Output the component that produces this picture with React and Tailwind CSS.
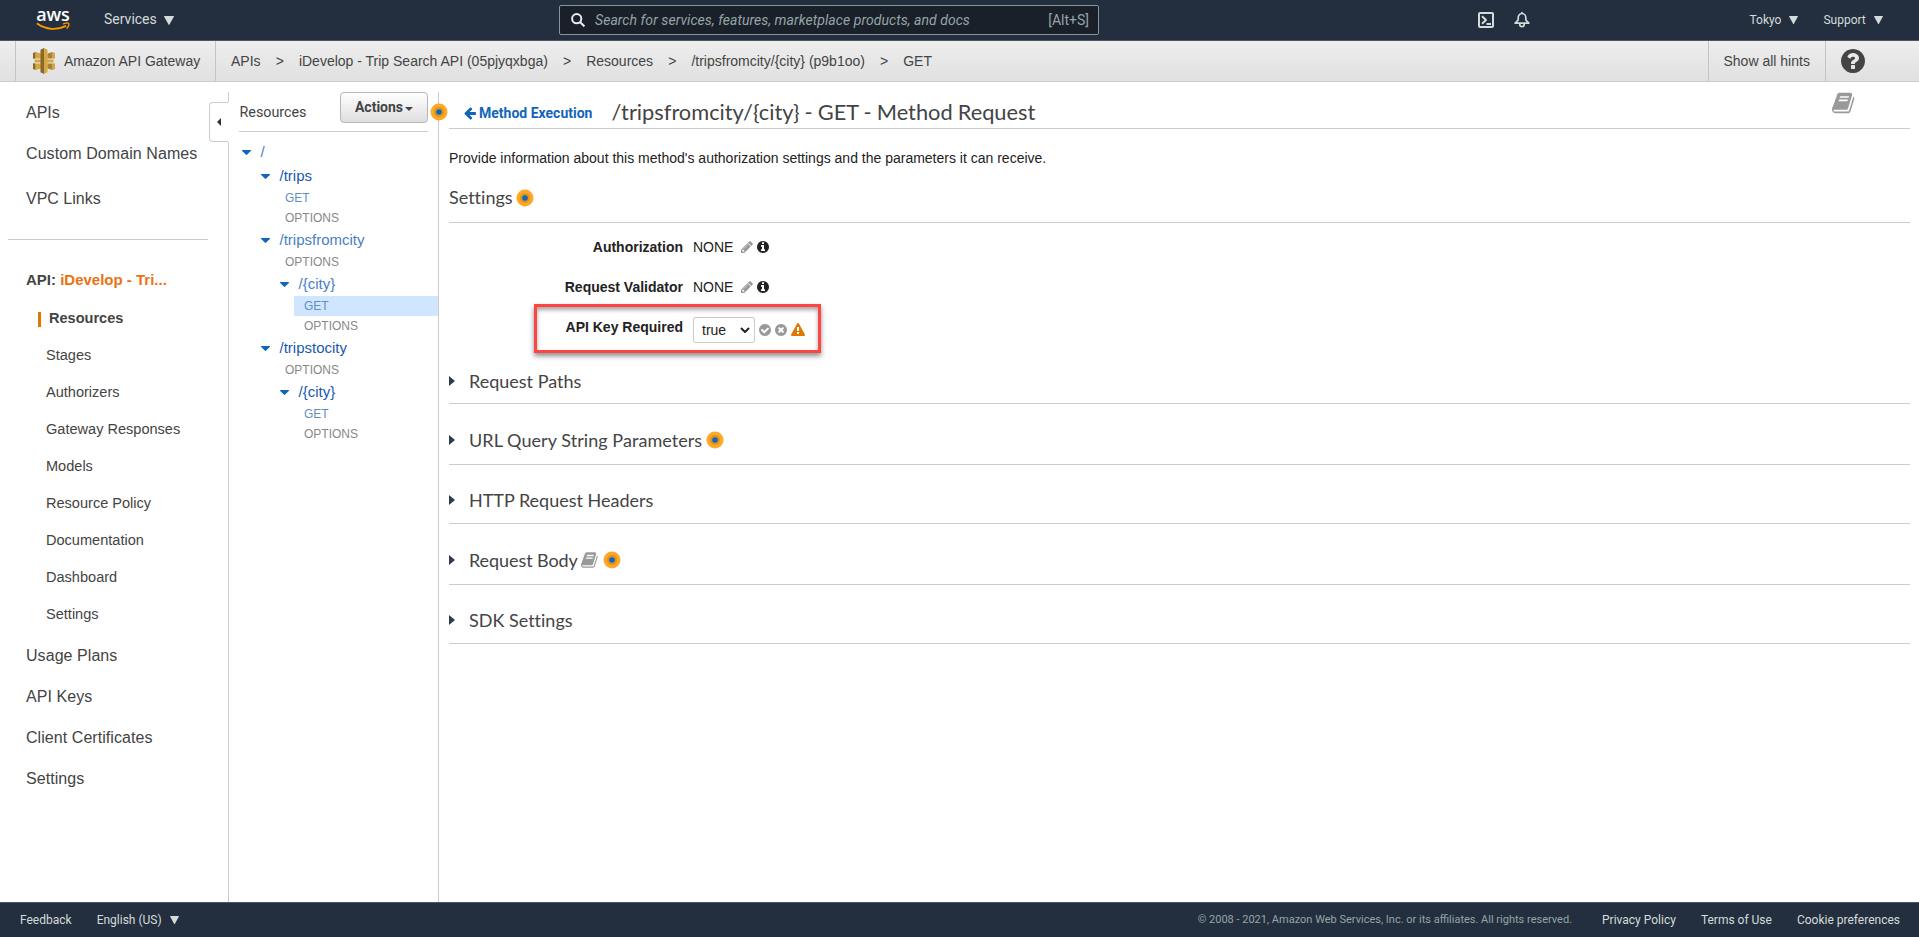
const PATHS = {
  book: 'M1639 478q40 57 18 129l-275 906q-19 64-76.5 107.5t-122.5 43.5h-923q-77 0-148.5-53.5t-99.5-131.5q-24-67-2-127 0-4 3-27t4-37q1-8-3-21.5t-3-19.5q2-11 8-21t16.5-23.5 16.5-23.5q23-38 45-91.5t30-91.5q3-10 .5-30t-.5-28q3-11 17-28t17-23q21-36 42-92t25-90q1-9-2.5-32t.5-28q4-13 22-30.5t22-22.5q19-26 42.5-84.5t27.5-96.5q1-8-3-25.5t-2-26.5q2-8 9-18t18-23 17-21q8-12 16.5-30.5t15-35 16-36 19.5-32 26.5-23.5 36-11.5 47.5 5.5l-1 3q38-9 51-9h761q74 0 114 56t18 130l-274 906q-36 119-71.5 153.5t-128.5 34.5h-869q-27 0-38 15-11 16-1 43 24 70 144 70h923q29 0 56-15.5t35-41.5l300-987q7-22 5-57 38 15 59 43zm-1064 2q-4 13 2 22.5t20 9.5h608q13 0 25.5-9.5t16.5-22.5l21-64q4-13-2-22.5t-20-9.5h-608q-13 0-25.5 9.5t-16.5 22.5zm-83 256q-4 13 2 22.5t20 9.5h608q13 0 25.5-9.5t16.5-22.5l21-64q4-13-2-22.5t-20-9.5h-608q-13 0-25.5 9.5t-16.5 22.5z',
  arrowLeft: 'M1664 896v128q0 53-32.5 90.5t-84.5 37.5h-704l293 294q38 36 38 90t-38 90l-75 76q-37 37-90 37-52 0-91-37l-651-652q-37-37-37-90 0-52 37-91l651-650q38-38 91-38 52 0 90 38l75 74q38 38 38 91t-38 91l-293 293h704q52 0 84.5 37.5t32.5 90.5z',
  pencil: 'M491 1536l91-91-235-235-91 91v107h128v128h107zm523-928q0-22-22-22-10 0-17 7l-542 542q-7 7-7 17 0 22 22 22 10 0 17-7l542-542q7-7 7-17zm-54-192l416 416-832 832h-416v-416zm683 96q0 53-37 90l-166 166-416-416 166-165q36-38 90-38 53 0 91 38l235 234q37 39 37 91z',
  info: 'M1152 1376v-160q0-14-9-23t-23-9h-96v-512q0-14-9-23t-23-9h-320q-14 0-23 9t-9 23v160q0 14 9 23t23 9h96v320h-96q-14 0-23 9t-9 23v160q0 14 9 23t23 9h448q14 0 23-9t9-23zm-128-896v-160q0-14-9-23t-23-9h-192q-14 0-23 9t-9 23v160q0 14 9 23t23 9h192q14 0 23-9t9-23zm640 416q0 209-103 385.5t-279.5 279.5-385.5 103-385.5-103-279.5-279.5-103-385.5 103-385.5 279.5-279.5 385.5-103 385.5 103 279.5 279.5 103 385.5z',
  check: 'M1412 734q0-28-18-46l-91-90q-19-19-45-19t-45 19l-408 407-226-226q-19-19-45-19t-45 19l-91 90q-18 18-18 46 0 27 18 45l362 362q19 19 45 19 27 0 46-19l543-543q18-18 18-45zm252 162q0 209-103 385.5t-279.5 279.5-385.5 103-385.5-103-279.5-279.5-103-385.5 103-385.5 279.5-279.5 385.5-103 385.5 103 279.5 279.5 103 385.5z',
  times: 'M1277 1122q0-26-19-45l-181-181 181-181q19-19 19-45 0-27-19-46l-90-90q-19-19-46-19-26 0-45 19l-181 181-181-181q-19-19-45-19-27 0-46 19l-90 90q-19 19-19 46 0 26 19 45l181 181-181 181q-19 19-19 45 0 27 19 46l90 90q19 19 46 19 26 0 45-19l181-181 181 181q19 19 45 19 27 0 46-19l90-90q19-19 19-46zm387-226q0 209-103 385.5t-279.5 279.5-385.5 103-385.5-103-279.5-279.5-103-385.5 103-385.5 279.5-279.5 385.5-103 385.5 103 279.5 279.5 103 385.5z',
  warning: 'M1024 1375v-190q0-14-9.5-23.5t-22.5-9.5h-192q-13 0-22.5 9.5t-9.5 23.5v190q0 14 9.5 23.5t22.5 9.5h192q13 0 22.5-9.5t9.5-23.5zm-2-374l18-459q0-12-10-19-13-11-24-11h-220q-11 0-24 11-10 7-10 21l17 457q0 10 10 16.5t24 6.5h185q14 0 23.5-6.5t10.5-16.5zm-14-934l768 1408q35 63-2 126-17 29-46.5 46t-63.5 17h-1536q-34 0-63.5-17t-46.5-46q-37-63-2-126l768-1408q17-31 47-49t65-18 65 18 47 49z',
  question: 'M1024 1376v-192q0-14-9-23t-23-9h-192q-14 0-23 9t-9 23v192q0 14 9 23t23 9h192q14 0 23-9t9-23zm256-672q0-88-55.5-163t-138.5-116-170-41q-243 0-371 213-15 24 8 42l132 100q7 6 19 6 16 0 25-12 53-68 86-92 34-24 86-24 48 0 85.5 26t37.5 59q0 38-20 61t-68 45q-63 28-115.5 86.5t-52.5 125.5v36q0 14 9 23t23 9h192q14 0 23-9t9-23q0-19 21.5-49.5t54.5-49.5q32-18 49-28.5t46-35 44.5-48 28-60.5 12.5-81zm384 192q0 209-103 385.5t-279.5 279.5-385.5 103-385.5-103-279.5-279.5-103-385.5 103-385.5 279.5-279.5 385.5-103 385.5 103 279.5 279.5 103 385.5z',
};

function Glyph({ name, className }) {
  return (
    <svg viewBox="0 0 1792 1792" fill="currentColor" className={`shrink-0 ${className}`}>
      <path d={PATHS[name]} />
    </svg>
  );
}

function Down({ className }) {
  return (
    <svg viewBox="0 0 10 9" fill="currentColor" className={`shrink-0 ${className}`}>
      <path d="M0.4 0h9.2a.4.4 0 0 1 .35.6L5.5 8.6a.6.6 0 0 1-1 0L.05.6A.4.4 0 0 1 .4 0z" />
    </svg>
  );
}

function Hint({ className = '' }) {
  return (
    <svg viewBox="0 0 18 18" className={`h-[18px] w-[18px] shrink-0 ${className}`}>
      <circle cx="9" cy="9" r="8.5" fill="#ffa726" />
      <circle cx="9" cy="9" r="5" fill="#e0941f" />
      <circle cx="9" cy="9" r="2.8" fill="#1166bb" />
    </svg>
  );
}

function AwsLogo() {
  return (
    <div className="flex h-[22px] w-[34px] flex-col items-center">
      <span className="h-[13px] font-['Open_Sans',sans-serif] text-[18px] leading-[10px] font-semibold tracking-[-0.2px] text-white">aws</span>
      <svg viewBox="0 0 34 9" className="h-[9px] w-[34px]">
        <path d="M1.500 1.800C10 7.800 21 8.400 29.500 4.200" fill="none" stroke="#ff9900" strokeWidth="1.900" strokeLinecap="round" />
        <path d="M27.500 1.800C29.500 1.100 32 0.900 32.600 1.400c.5.900-.2 3.200-1.500 4.800" fill="none" stroke="#ff9900" strokeWidth="1.300" strokeLinecap="round" />
      </svg>
    </div>
  );
}

function GatewayLogo() {
  return (
    <svg viewBox="0 0 22 26" className="h-[26px] w-[22px] shrink-0">
      <path d="M2.500 4L8 5.500v5H2.500zM2.500 22L8 20.500v-5H2.500zM1.500 11.500H8v3H1.500z" fill="#d9a741" />
      <path d="M0 5l2.500-1v6.500L0 10.800zM0 21l2.500 1v-6.500L0 15.200zM11 0L7.500 1.800v22.400L11 26z" fill="#876929" />
      <path d="M11 0l3.500 1.800v22.400L11 26zM19.500 4l2.500 1v5.800l-2.500-.3zM19.500 22l2.500-1v-5.800l-2.500.3zM14.500 11.500h6v3h-6z" fill="#d9a741" />
      <path d="M19.500 4l-5 1.500v5h5zM19.500 22l-5-1.500v-5h5z" fill="#a98232" />
    </svg>
  );
}

function TopBar() {
  return (
    <header className="flex h-[41px] items-center border-b border-[#4b5563] bg-[#232f3e] font-['Roboto',sans-serif] text-[#d5dbdb]">
      <div className="ml-9"><AwsLogo /></div>
      <div className="mb-[2px] ml-[34px] flex w-[455px] items-center gap-[7px] text-[14px]">
        <span>Services</span>
        <Down className="mt-[2px] h-[9px] w-[10px]" />
      </div>
      <div className="flex h-[30px] w-[540px] items-center rounded-[2px] border border-[#879596] bg-[#1a2029] pr-[9px] pl-[11px] text-[#95a5a6]">
        <svg viewBox="0 0 14 14" className="h-[14px] w-[14px]" fill="none" stroke="#eaeded" strokeWidth="2">
          <circle cx="5.700" cy="5.700" r="4.600" />
          <path d="M9 9l4.400 4.400" />
        </svg>
        <span className="ml-[10px] flex-1 text-[14px] tracking-[0.06px] italic">Search for services, features, marketplace products, and docs</span>
        <span className="text-[14px]">[Alt+S]</span>
      </div>
      <svg viewBox="0 0 16 16" className="ml-[379px] h-4 w-4" fill="none" stroke="currentColor" strokeWidth="2" strokeLinejoin="round">
        <rect x="1" y="1" width="14" height="14" rx="1" />
        <path d="M4 4.200L8 8l-4 3.800M8.500 12H13" />
      </svg>
      <svg viewBox="0 0 16 16" className="ml-5 h-4 w-4" fill="none" stroke="currentColor" strokeWidth="1.700" strokeLinejoin="round">
        <path d="M1.200 11.200L4.200 8V5.800C4.200 3.400 5.800 1.500 8 1.500s3.800 1.900 3.800 4.300V8l3 3.200z" />
        <path d="M5.800 11.500v1a2.200 2.200 0 0 0 4.400 0v-1M8 0v1.500" />
      </svg>
      <div className="mb-px ml-[219.500px] flex items-center gap-2 text-[12px]">
        <span>Tokyo</span>
        <Down className="mt-[1px] h-2 w-[9px]" />
      </div>
      <div className="mb-px ml-[25px] flex items-center gap-2 text-[12px]">
        <span>Support</span>
        <Down className="mt-[1px] h-2 w-[9px]" />
      </div>
    </header>
  );
}

const CRUMBS = ['APIs', 'iDevelop - Trip Search API (05pjyqxbga)', 'Resources', '/tripsfromcity/{city} (p9b1oo)', 'GET'];

function CrumbBar() {
  return (
    <nav className="flex h-[41px] border-b border-[#ccc] bg-gradient-to-b from-[#eeeeee] to-[#e0e0e0] text-[14px] text-[#444]">
      <div className="ml-[15px] flex w-[201px] items-center border-x border-[#c4c4c4] pl-[17px]">
        <GatewayLogo />
        <span className="ml-[9px]">Amazon API Gateway</span>
      </div>
      <div className="flex flex-1 items-center pl-[15px]">
        {CRUMBS.map((c, i) => (
          <span key={c} className="flex items-center whitespace-pre">
            {i > 0 && <span className="w-[38.300px] text-center">{'>'}</span>}
            {c}
          </span>
        ))}
      </div>
      <div className="flex w-[118px] items-center border-x border-[#c4c4c4] pl-[14.500px]">Show all hints</div>
      <div className="flex w-[93px] items-center pl-[13px]">
        <Glyph name="question" className="h-7 w-7" />
      </div>
    </nav>
  );
}

const SUB = ['Stages', 'Authorizers', 'Gateway Responses', 'Models', 'Resource Policy', 'Documentation', 'Dashboard', 'Settings'];
const BOTTOM = ['Usage Plans', 'API Keys', 'Client Certificates', 'Settings'];

function SideNav() {
  return (
    <aside className="flex w-[209px] shrink-0 flex-col text-[16px] text-[#444]">
      <div className="flex h-[41px] items-center pl-[26px]">APIs</div>
      <div className="flex h-[41px] items-center pl-[26px] tracking-[0.080px]">Custom Domain Names</div>
      <div className="mt-1 flex h-[41px] items-center pl-[26px]">VPC Links</div>
      <div className="mt-5 ml-2 h-px w-[200px] bg-[#ccc]" />
      <div className="mt-5 flex h-[41px] items-center pl-[26px] text-[15px] font-bold whitespace-pre">
        API: <span className="text-[#ec7211]">iDevelop - Tri...</span>
      </div>
      <div className="flex h-[36px] items-center pl-[38px] text-[14.560px] font-bold">
        <span className="mr-2 h-[15px] w-[3px] bg-[#e07700]" />
        Resources
      </div>
      {SUB.map((s) => (
        <div key={s} className="flex h-[37px] items-center pl-[46px] text-[14.560px]">{s}</div>
      ))}
      <div className="mt-[2px] tracking-[0.060px]">
        {BOTTOM.map((s) => (
          <div key={s} className="flex h-[41px] items-center pl-[26px]">{s}</div>
        ))}
      </div>
    </aside>
  );
}

function CollapseRail() {
  return (
    <div className="flex w-5 shrink-0 flex-col pt-[10px]">
      <div className="h-[10px] border-r border-[#ccc]" />
      <div className="flex h-[40px] w-[19px] items-center rounded-l-[4px] border border-r-0 border-[#ccc] pl-[7px] text-[#333]">
        <svg viewBox="0 0 4 8" fill="currentColor" className="h-2 w-1"><path d="M4 0v8L0 4z" /></svg>
      </div>
      <div className="flex-1 border-r border-[#ccc]" />
    </div>
  );
}

const TREE = [
  { t: '/', d: 0, r: true, soft: true },
  { t: '/trips', d: 1, r: true },
  { t: 'GET', d: 1 },
  { t: 'OPTIONS', d: 1 },
  { t: '/tripsfromcity', d: 1, r: true, soft: true },
  { t: 'OPTIONS', d: 1 },
  { t: '/{city}', d: 2, r: true, soft: true },
  { t: 'GET', d: 2, on: true },
  { t: 'OPTIONS', d: 2 },
  { t: '/tripstocity', d: 1, r: true },
  { t: 'OPTIONS', d: 1 },
  { t: '/{city}', d: 2, r: true },
  { t: 'GET', d: 2 },
  { t: 'OPTIONS', d: 2 },
];
const INDENT = ['ml-0', 'ml-[19px]', 'ml-[38px]'];

function ResourceTree() {
  return (
    <section className="w-[210px] shrink-0 pt-[10px]">
      <div className="relative flex h-full flex-col border-r border-[#ccc]">
        <div className="ml-[10px] flex h-10 w-[189px] items-start justify-between border-b border-[#ccc]">
          <span className="pt-[10px] pl-[0.500px] font-['Roboto',sans-serif] text-[14.300px] text-[#444]">Resources</span>
          <button className="flex h-[31px] w-[88px] items-center justify-center gap-[2px] rounded-[4px] border border-[#b8b8b8] bg-gradient-to-b from-white to-[#dedede] font-['Roboto',sans-serif] text-[14px] font-bold text-[#444]">
            Actions
            <svg viewBox="0 0 8 4" fill="currentColor" className="mt-[2px] h-1 w-2"><path d="M0 0h8L4 4z" /></svg>
          </button>
        </div>
        <Hint className="absolute top-[11px] -right-[10px]" />
        <div className="pt-2 pl-[13px]">
          {TREE.map((n, i) =>
            n.r ? (
              <div key={i} className={`flex h-6 items-center text-[15px] ${INDENT[n.d]} ${n.soft ? 'text-[#4a80c4]' : 'text-[#1a5ab0]'}`}>
                <svg viewBox="0 0 9 5" className="mt-px mr-[8px] h-[5px] w-[9px]"><path d="M.5 0h8a.5.5 0 0 1 .3.900L4.900 4.800a.5.500 0 0 1-.8 0L.2.900A.5.500 0 0 1 .5 0z" fill="#1166bb" /></svg>
                <span className="pl-[1.500px]">{n.t}</span>
              </div>
            ) : (
              <div key={i} className={INDENT[n.d]}>
                <div className={`ml-[14px] flex h-5 items-center pl-[10px] text-[12px] ${n.on ? 'bg-[#d0e6fe]' : ''} ${n.t === 'GET' ? 'text-[#5f8fc3]' : 'text-[#888]'}`}>{n.t}</div>
              </div>
            )
          )}
        </div>
      </div>
    </section>
  );
}

function SettingRow({ label, children }) {
  return (
    <div className="flex h-10 items-center text-[14px] text-[#222]">
      <div className="w-[234px] text-right font-bold">{label}</div>
      <div className="ml-[10px] flex items-center">{children}</div>
    </div>
  );
}

function NoneValue() {
  return (
    <>
      <span>NONE</span>
      <Glyph name="pencil" className="ml-[7px] h-[14px] w-[14px] text-[#999]" />
      <Glyph name="info" className="ml-[2px] h-[14px] w-[14px] text-[#222]" />
    </>
  );
}

const SECTIONS = [
  { t: 'Request Paths', h: 'h-[45px]', gap: '' },
  { t: 'URL Query String Parameters', h: 'h-[49px]', gap: 'mt-3', track: 'tracking-[0.060px]', hint: true },
  { t: 'HTTP Request Headers', h: 'h-[47px]', gap: 'mt-3' },
  { t: 'Request Body', h: 'h-[49px]', gap: 'mt-3', track: 'tracking-[-0.080px]', hint: true, book: true },
  { t: 'SDK Settings', h: 'h-[47px]', gap: 'mt-3' },
];

function Main() {
  return (
    <main className="flex flex-1 flex-col pr-[9px] pl-[10px] [font-variant-ligatures:none]">
      <div className="flex h-[47px] border-b border-[#ccc]">
        <div className="flex h-[30px] items-center self-end pl-[14px]">
          <Glyph name="arrowLeft" className="mr-[2px] h-[14px] w-[14px] text-[#1166bb]" />
          <span className="w-[113px] font-['Roboto',sans-serif] text-[14px] font-bold whitespace-nowrap text-[#1166bb]">Method Execution</span>
        </div>
        <h1 className="ml-[19.500px] self-end font-['Lato',sans-serif] text-[21.800px] leading-[32px] [word-spacing:-0.5px] text-[#444]">/tripsfromcity/{'{city}'} - GET - Method Request</h1>
        <Glyph name="book" className="mt-[9px] mr-[54px] ml-auto h-[24px] w-[24px] text-[#999]" />
      </div>
      <p className="mt-[19px] text-[14px] leading-[20px] text-[#222]">Provide information about this method's authorization settings and the parameters it can receive.</p>
      <div className="mt-[11px] flex h-[44px] gap-[3px] border-b border-[#ccc]">
        <h2 className="pt-[6px] font-['Lato',sans-serif] text-[18px] leading-[24px] text-[#444]">Settings</h2>
        <Hint className="mt-[10px]" />
      </div>
      <div className="mt-[4px]">
        <SettingRow label="Authorization"><NoneValue /></SettingRow>
        <SettingRow label="Request Validator"><NoneValue /></SettingRow>
        <div className="relative">
          <SettingRow label="API Key Required">
            <div className="mt-[6px] flex items-center">
              <div className="flex h-[26px] w-[62px] items-center justify-between rounded-[2px] border border-[#ccc] bg-white pr-1 pl-2">
                true
                <svg viewBox="0 0 10 6" className="h-[6px] w-[10px]" fill="none" stroke="#222" strokeWidth="2"><path d="M1 1l4 4 4-4" /></svg>
              </div>
              <Glyph name="check" className="ml-[3px] h-[14px] w-[14px] text-[#999]" />
              <Glyph name="times" className="ml-[2px] h-[14px] w-[14px] text-[#999]" />
              <Glyph name="warning" className="ml-[3px] h-[14px] w-[14px] text-[#e07700]" />
            </div>
          </SettingRow>
          <div className="pointer-events-none absolute -top-[3px] left-[85px] h-[49px] w-[287px] border-[3px] border-[#ff4444] shadow-[0_3px_5px_rgba(0,0,0,0.45),inset_0_3px_4px_rgba(0,0,0,0.35)]" />
        </div>
      </div>
      <div className="mt-[12px]">
        {SECTIONS.map((s) => (
          <div key={s.t} className={`flex items-center border-b border-[#ccc] ${s.h} ${s.gap}`}>
            <svg viewBox="0 0 6 10" className="h-[10px] w-[6px]"><path d="M0 0l6 5-6 5z" fill="#2f3b4c" /></svg>
            <span className={`ml-[14px] font-['Lato',sans-serif] text-[18px] text-[#444] ${s.track || ''}`}>{s.t}</span>
            {s.book && <Glyph name="book" className="ml-[3px] h-[18px] w-[18px] text-[#999]" />}
            {s.hint && <Hint className="ml-[4px]" />}
          </div>
        ))}
      </div>
    </main>
  );
}

function Footer() {
  return (
    <footer className="flex h-[35px] items-center border-t border-[#4b5563] bg-[#232f3e] pr-[19px] pl-5 font-['Roboto',sans-serif] text-[12px] text-[#d5dbdb]">
      <span>Feedback</span>
      <span className="ml-[25px]">English (US)</span>
      <Down className="ml-2 h-2 w-[9px]" />
      <span className="ml-auto text-[11px] text-[#95a5a6]">© 2008 - 2021, Amazon Web Services, Inc. or its affiliates. All rights reserved.</span>
      <span className="ml-[30px]">Privacy Policy</span>
      <span className="ml-[25px]">Terms of Use</span>
      <span className="ml-[25px]">Cookie preferences</span>
    </footer>
  );
}

export default function App() {
  return (
    <div className="flex h-[937px] w-[1919px] flex-col overflow-hidden bg-white font-['Liberation_Sans',Arial,sans-serif]">
      <TopBar />
      <CrumbBar />
      <div className="flex min-h-0 flex-1">
        <div className="pt-[10px]"><SideNav /></div>
        <CollapseRail />
        <ResourceTree />
        <Main />
      </div>
      <Footer />
    </div>
  );
}
